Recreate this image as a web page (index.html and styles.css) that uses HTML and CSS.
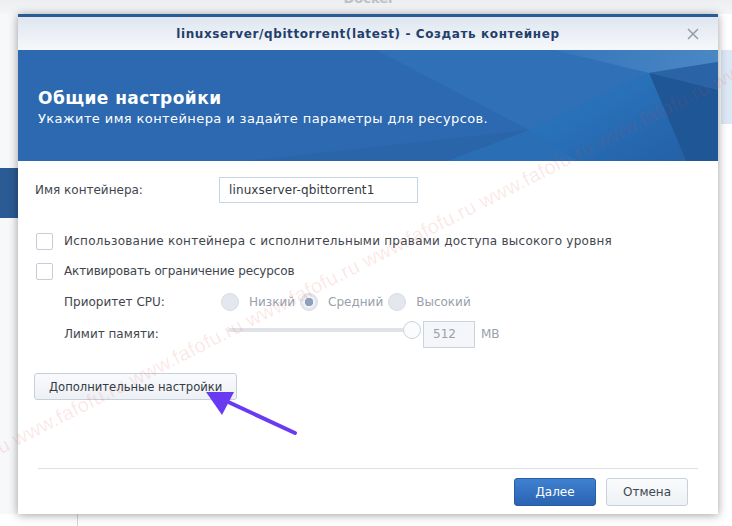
FILE: index.html
```html
<!DOCTYPE html>
<html lang="ru">
<head>
<meta charset="utf-8">
<title>Создать контейнер</title>
<link rel="stylesheet" href="styles.css">
</head>
<body>
<div class="desk">
  <div class="topbar"><span class="apptitle">Docker</span></div>
  <div class="stage">
    <div class="side side-left"><div class="navblock"></div></div>
    <div class="dialog">
      <div class="titlebar">
        <span></span>
        <span class="title">linuxserver/qbittorrent(latest) - Создать контейнер</span>
        <span class="close">
          <svg width="12" height="12" viewBox="0 0 12 12"><path d="M1 1 L11 11 M11 1 L1 11" stroke="#949ca6" stroke-width="1.5" fill="none"/></svg>
        </span>
      </div>
      <div class="banner">
        <svg class="banner-art" width="700" height="111" viewBox="0 0 700 111">
          <defs>
            <linearGradient id="g4" x1="0" y1="0" x2="1" y2="1">
              <stop offset="0" stop-color="#2b7cc6"/>
              <stop offset="1" stop-color="#2460a6"/>
            </linearGradient>
            <linearGradient id="g2" x1="0" y1="0" x2="1" y2="0">
              <stop offset="0" stop-color="#3576ba"/>
              <stop offset="1" stop-color="#4a87c5"/>
            </linearGradient>
          </defs>
          <rect width="700" height="111" fill="#2c69b0"/>
          <polygon points="230,111 511,80 430,111" fill="#2a65aa"/>
          <polygon points="358,0 535,0 631,23 511,80" fill="#2f70b6"/>
          <polygon points="535,0 700,0 700,12 631,23" fill="url(#g2)"/>
          <polygon points="631,23 700,12 700,40" fill="#2a63a6"/>
          <polygon points="631,23 700,40 700,111 668,111" fill="#1e5696"/>
          <polygon points="511,80 631,23 668,111 560,111" fill="url(#g4)"/>
          <polygon points="430,111 511,80 560,111" fill="#2a6fb5"/>
        </svg>
        <h1 class="banner-title">Общие настройки</h1>
        <p class="banner-sub">Укажите имя контейнера и задайте параметры для ресурсов.</p>
      </div>
      <div class="content">
        <div class="row name-row">
          <span class="label">Имя контейнера:</span>
          <div class="textbox">linuxserver-qbittorrent1</div>
        </div>
        <div class="row check-row first-check">
          <span class="checkbox"></span>
          <span class="text text-wide">Использование контейнера с исполнительными правами доступа высокого уровня</span>
        </div>
        <div class="row check-row">
          <span class="checkbox"></span>
          <span class="text text-narrow">Активировать ограничение ресурсов</span>
        </div>
        <div class="row sub-row cpu-row">
          <span class="sublabel">Приоритет CPU:</span>
          <div class="radios">
            <span class="radio-item"><span class="radio"></span><span class="muted">Низкий</span></span>
            <span class="radio-item"><span class="radio checked"></span><span class="muted">Средний</span></span>
            <span class="radio-item"><span class="radio"></span><span class="muted">Высокий</span></span>
          </div>
        </div>
        <div class="row sub-row mem-row">
          <span class="sublabel">Лимит памяти:</span>
          <div class="slider"><span class="track"></span><span class="thumb"></span></div>
          <div class="numbox">512</div>
          <span class="muted unit">MB</span>
        </div>
        <div class="adv-wrap"><button class="btn btn-adv">Дополнительные настройки</button></div>
      </div>
      <div class="footer">
        <button class="btn btn-primary">Далее</button>
        <button class="btn btn-cancel">Отмена</button>
      </div>
    </div>
    <div class="side side-right"><div class="panel"></div></div>
  </div>
  <div class="bottom"><div class="vline"></div></div>
  <div class="watermark">u www.fafofu.ru www.fafofu.ru www.fafofu.ru www.fafofu.ru www.fafofu.ru www.fafofu.ru www.fafofu.ru</div>
  <svg class="arrow" width="732" height="526" viewBox="0 0 732 526">
    <line x1="295" y1="433" x2="224" y2="400" stroke="#6a3af2" stroke-width="4" stroke-linecap="round"/>
    <polygon points="206,392 234,392 222,415" fill="#6a3af2"/>
  </svg>
</div>
</body>
</html>
```
FILE: styles.css
```css
html, body {
  margin: 0;
  padding: 0;
}
body {
  background: #ffffff;
  font-family: "DejaVu Sans", Verdana, sans-serif;
  font-size: 12px;
  color: #3f464e;
}
.desk {
  position: relative;
  width: 732px;
  height: 526px;
  overflow: hidden;
  background: #fbfbfc;
}
.topbar {
  height: 14px;
  overflow: hidden;
  background: linear-gradient(#eceef1, #f4f5f7);
  display: flex;
  justify-content: center;
  padding-left: 6px;
}
.apptitle {
  display: block;
  margin-top: -9px;
  line-height: 16px;
  font-size: 13px;
  font-weight: bold;
  color: #bcc1c7;
}
.stage {
  display: flex;
  height: 500px;
}
.side {
  flex: none;
}
.side-left {
  width: 18px;
  background: #f7f8f9;
}
.navblock {
  margin-top: 154px;
  height: 50px;
  background: #2b5b94;
}
.side-right {
  width: 14px;
  background: #ffffff;
}
.panel {
  margin-top: 36px;
  margin-left: 3px;
  height: 74px;
  background: #dde8f6;
}
.dialog {
  position: relative;
  z-index: 2;
  width: 700px;
  flex: none;
  display: flex;
  flex-direction: column;
  background: #ffffff;
  border-top: 3px solid #2b5b96;
  box-shadow: 0 1px 9px rgba(0, 0, 0, 0.38);
}
.titlebar {
  height: 33px;
  display: grid;
  grid-template-columns: 40px 1fr 40px;
  align-items: center;
  background: linear-gradient(#dfe6ef, #f6f8fb);
}
.title {
  text-align: center;
  font-weight: bold;
  font-size: 12px;
  color: #1f406c;
  letter-spacing: 0.6px;
}
.close {
  display: flex;
  justify-content: flex-end;
  padding-right: 19px;
  padding-top: 1px;
}
.close svg {
  display: block;
}
.banner {
  position: relative;
  height: 111px;
  box-sizing: border-box;
  padding: 38px 0 0 20px;
  overflow: hidden;
  color: #ffffff;
}
.banner-art {
  position: absolute;
  left: 0;
  top: 0;
  display: block;
}
.banner-title {
  position: relative;
  margin: 0;
  font-size: 17px;
  line-height: 20px;
  font-weight: bold;
  letter-spacing: 0.45px;
}
.banner-sub {
  position: relative;
  margin: 3px 0 0;
  font-size: 13px;
  line-height: 16px;
  letter-spacing: 0.4px;
}
.content {
  flex: 1;
  padding: 16px 0 0 17px;
}
.row {
  display: flex;
  align-items: center;
}
.name-row {
  height: 26px;
}
.label {
  width: 184px;
  flex: none;
}
.textbox {
  width: 199px;
  height: 26px;
  box-sizing: border-box;
  border: 1px solid #c7d4e2;
  padding-left: 9px;
  line-height: 24px;
  color: #333a42;
  background: #ffffff;
  letter-spacing: 0.12px;
}
.check-row {
  height: 30px;
}
.first-check {
  margin-top: 23px;
}
.text-wide {
  letter-spacing: 0.25px;
}
.text-narrow {
  letter-spacing: -0.15px;
}
.checkbox {
  width: 17px;
  height: 17px;
  box-sizing: border-box;
  flex: none;
  margin-left: 1px;
  margin-right: 11px;
  border: 1px solid #c5cdd7;
  border-radius: 2px;
  background: #ffffff;
}
.sub-row {
  padding-left: 29px;
}
.cpu-row {
  height: 30px;
  margin-top: 1px;
}
.sublabel {
  width: 157px;
  flex: none;
}
.radios {
  display: flex;
  align-items: center;
  gap: 5px;
}
.radio-item {
  display: flex;
  align-items: center;
  gap: 10px;
}
.radio {
  width: 18px;
  height: 18px;
  box-sizing: border-box;
  border-radius: 50%;
  border: 1px solid #d6dce4;
  background: #e4e8ee;
}
.radio.checked {
  background: radial-gradient(circle, #8da1be 0 4px, #f2f4f7 4.5px 5.5px, #e4e8ee 6px);
}
.muted {
  color: #98a1ac;
}
.mem-row {
  height: 32px;
  margin-top: 1px;
}
.slider {
  width: 200px;
  height: 18px;
  box-sizing: border-box;
  padding-left: 7px;
  display: flex;
  align-items: center;
  align-self: flex-start;
  margin-top: 3px;
}
.track {
  flex: 1;
  height: 4px;
  border-radius: 2px;
  background: #dfe3e7;
}
.thumb {
  width: 18px;
  height: 18px;
  box-sizing: border-box;
  flex: none;
  margin-left: -1px;
  border-radius: 50%;
  border: 1px solid #c9d2dc;
  background: #fbfcfd;
}
.numbox {
  margin-left: 2px;
  width: 52px;
  height: 27px;
  box-sizing: border-box;
  border: 1px solid #c9d4e0;
  background: #f4f6f9;
  padding-left: 9px;
  line-height: 25px;
  color: #98a1ac;
  margin-top: 1px;
}
.unit {
  margin-left: 6px;
}
.adv-wrap {
  margin-top: 23px;
  margin-left: -1px;
}
.btn {
  font-family: "DejaVu Sans", Verdana, sans-serif;
  font-size: 12px;
  box-sizing: border-box;
  border-radius: 3px;
  cursor: pointer;
  margin: 0;
}
.btn-adv {
  height: 27px;
  padding: 0 14px;
  font-size: 11.6px;
  border: 1px solid #c5d0dc;
  background: linear-gradient(#f9fafc, #edf0f4);
  color: #343c45;
}
.footer {
  margin: 0 20px;
  border-top: 1px solid #dde1e6;
  padding: 9px 10px 8px 0;
  display: flex;
  justify-content: flex-end;
  gap: 10px;
}
.btn-primary,
.btn-cancel {
  width: 82px;
  height: 28px;
  padding: 0;
}
.btn-primary {
  border: 1px solid #285ca3;
  background: linear-gradient(#3f81d0, #2a63b2);
  color: #ffffff;
}
.btn-cancel {
  border: 1px solid #c7d1dc;
  background: linear-gradient(#fafbfd, #edf1f5);
  color: #3f4852;
}
.bottom {
  height: 12px;
  display: flex;
  background: #ffffff;
}
.vline {
  width: 1px;
  margin-left: 77px;
  background: #d2d6db;
}
.watermark {
  position: absolute;
  z-index: 5;
  left: -2px;
  top: 436px;
  height: 24px;
  line-height: 24px;
  white-space: nowrap;
  font-family: "Liberation Sans", Arial, sans-serif;
  font-size: 20px;
  letter-spacing: 0.3px;
  color: rgba(225, 70, 70, 0.13);
  transform-origin: 0 50%;
  transform: rotate(-27deg);
  pointer-events: none;
}
.arrow {
  position: absolute;
  z-index: 6;
  left: 0;
  top: 0;
  pointer-events: none;
}
```
